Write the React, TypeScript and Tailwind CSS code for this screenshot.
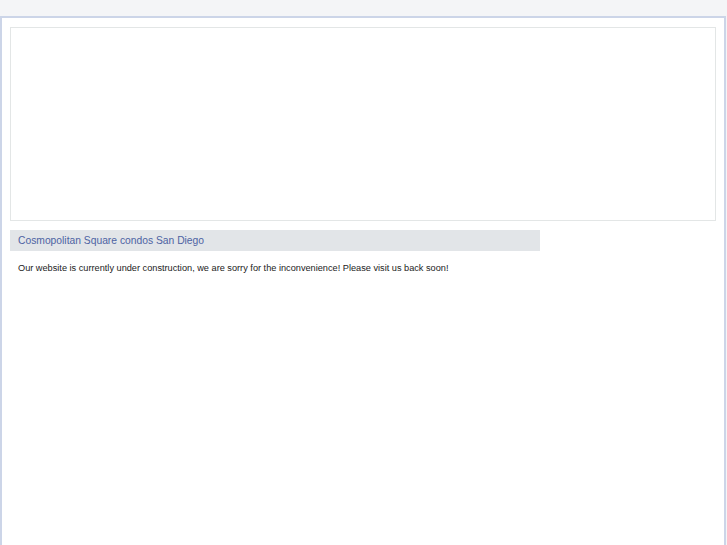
const App = () => {
  return (
    <div className="min-h-[545px] bg-[#f4f5f7] pt-4 font-['Liberation_Sans',Arial,sans-serif]">
      <div className="min-h-[529px] bg-white border-t-2 border-l-2 border-r-2 border-[#ccd5e8] px-2 pt-[9px] mr-px">
        <div className="h-[194px] border border-[#e3e6e6] bg-white" />
        <div className="mt-[9px] w-[530px] h-[21px] bg-[#e2e5e8] pl-2 flex items-center">
          <h1 className="text-[10.3px] text-[#4d63a3]">Cosmopolitan Square condos San Diego</h1>
        </div>
        <p className="mt-[11px] pl-2 text-[9.2px] text-[#222]">
          Our website is currently under construction, we are sorry for the inconvenience! Please visit us back soon!
        </p>
      </div>
    </div>
  );
};

export default App;
